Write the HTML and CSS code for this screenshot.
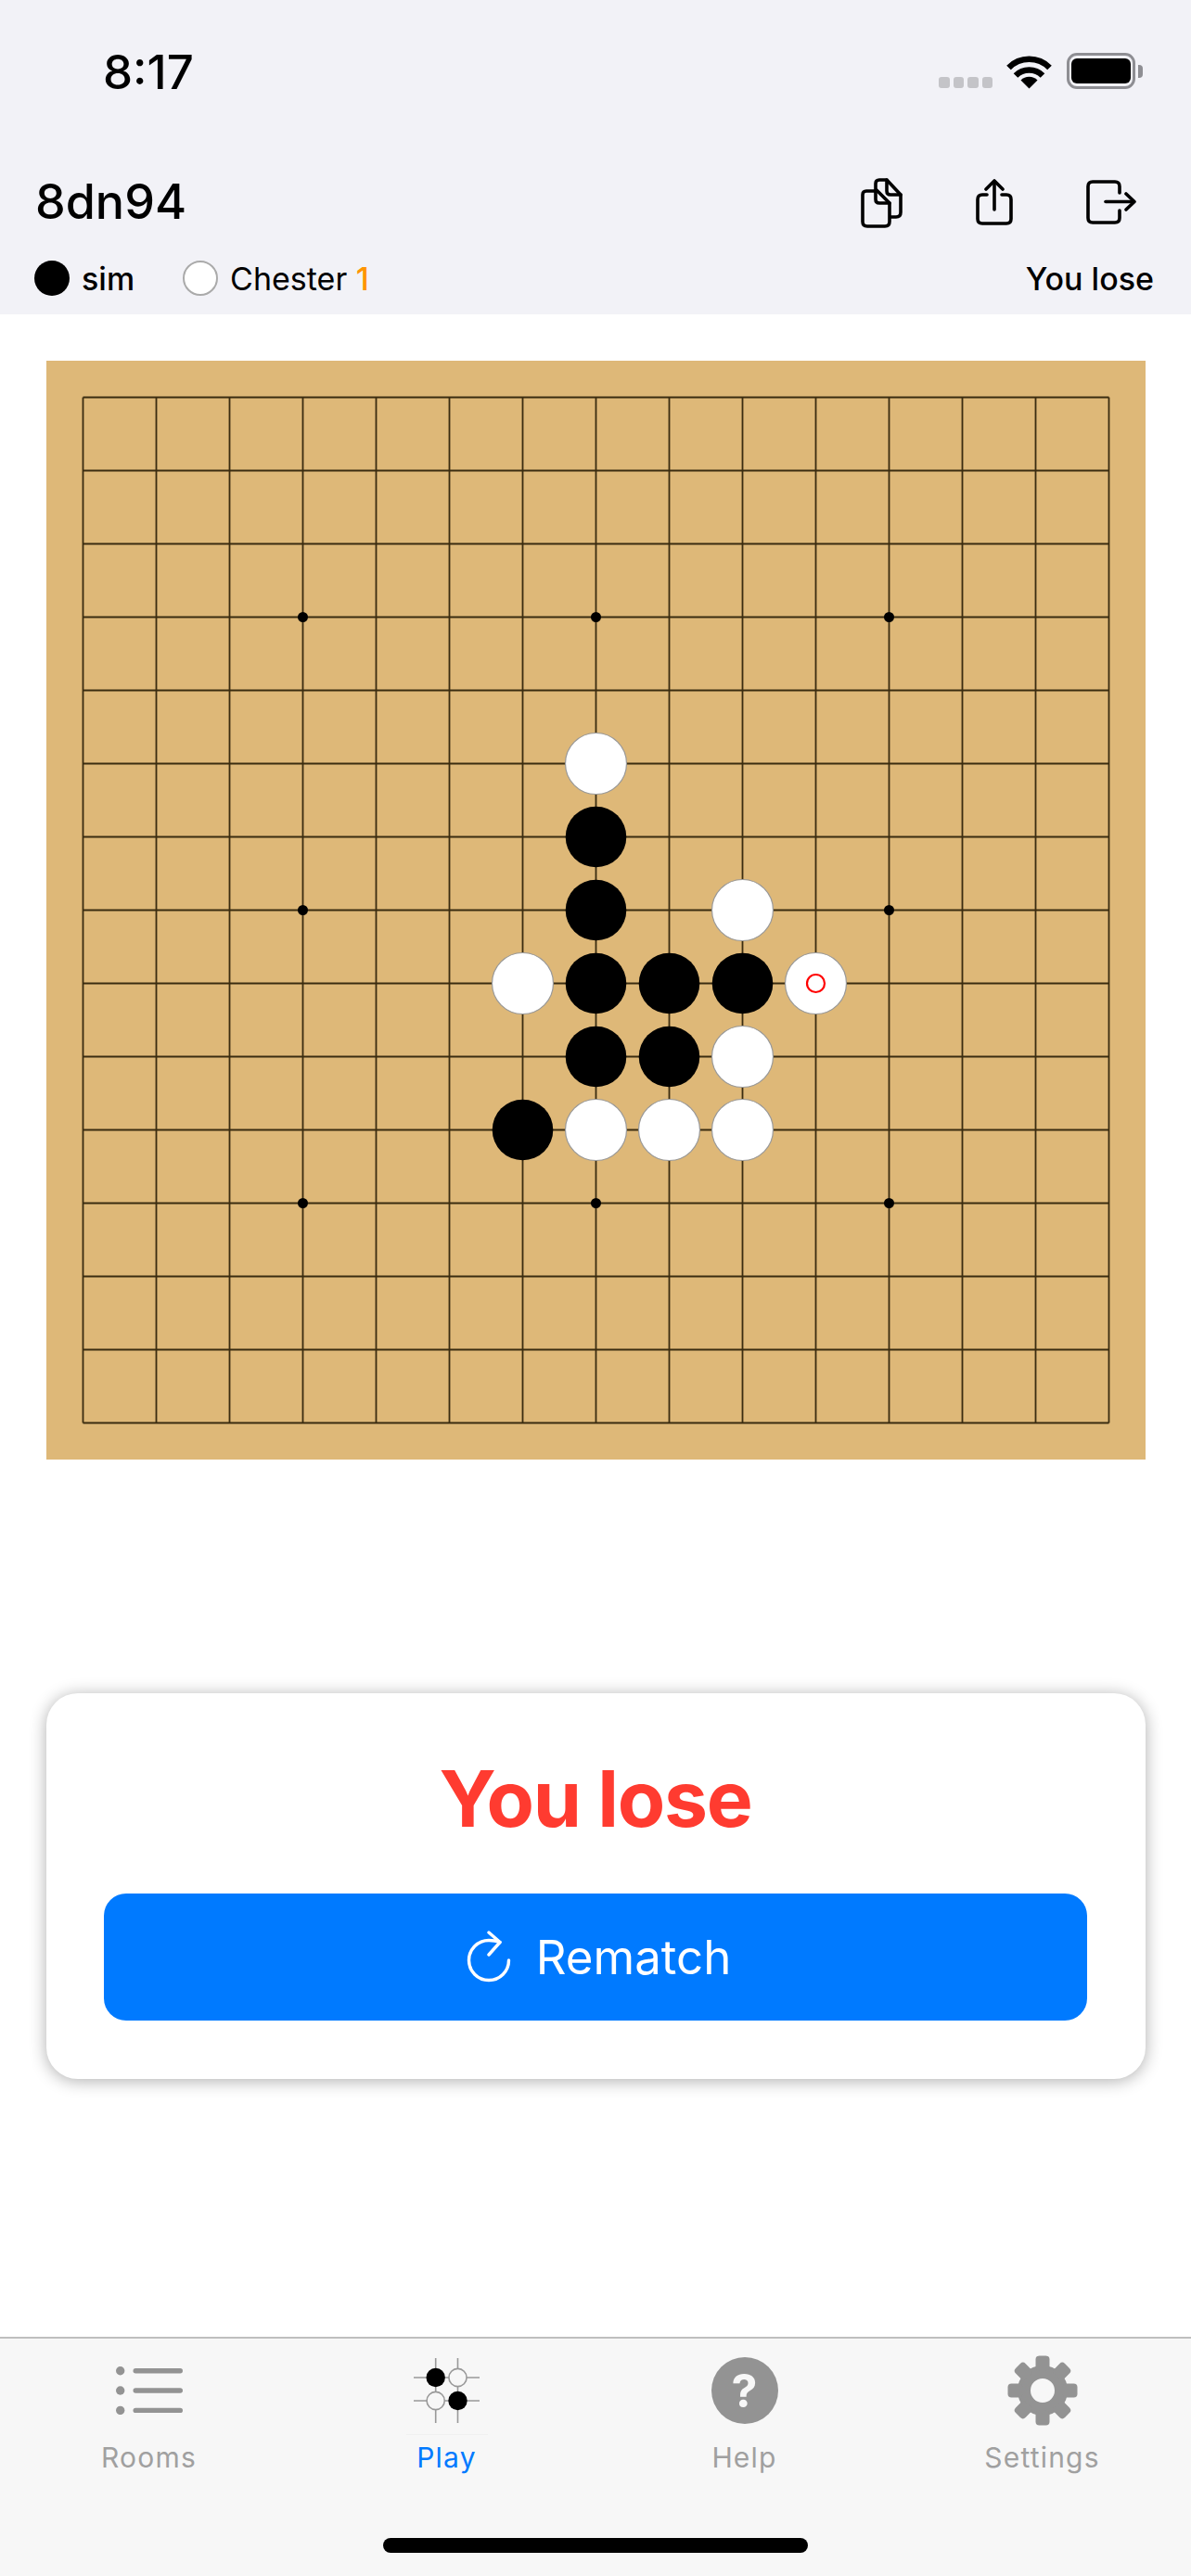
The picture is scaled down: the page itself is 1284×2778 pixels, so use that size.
FILE: index.html
```html
<!DOCTYPE html>
<html>
<head>
    <title>Gomoku</title>
    <link rel="stylesheet" href="styles.css">
</head>
<body>
    <div class="app">
        <header class="top">
            <div class="status-bar">
                <span class="clock">8:17</span>
                <div class="status-icons">
                    <div class="signal"><i></i><i></i><i></i><i></i></div>
                    <svg class="wifi" width="49" height="38" viewBox="0 0 49 38">
                        <path d="M2.5 15 A31 31 0 0 1 46.5 15" fill="none" stroke="#000" stroke-width="6.5"/>
                        <path d="M10 23.5 A20.5 20.5 0 0 1 39 23.5" fill="none" stroke="#000" stroke-width="6.5"/>
                        <path d="M24.5 37.5 L15.5 28.5 A12.7 12.7 0 0 1 33.5 28.5 Z" fill="#000"/>
                    </svg>
                    <div class="battery"><div class="battery-level"></div></div>
                    <div class="battery-cap"></div>
                </div>
            </div>
            <div class="title-row">
                <h1>8dn94</h1>
                <div class="actions">
                    <svg class="icon-copy" width="46" height="55" viewBox="0 0 46 55">
                        <path d="M16 15 H7 Q3 15 3 19 V48 Q3 53 8 53 H27 Q32 53 32 48 V28 L18 14"/>
                        <path d="M17 15 V24 Q17 28 21 28 H32"/>
                        <path d="M17 15 V7 Q17 3 21 3 H29 L44 19 V38 Q44 43 39 43 H33"/>
                        <path d="M29 3 V15 Q29 19 33 19 H44"/>
                    </svg>
                    <svg class="icon-share" width="40" height="50" viewBox="0 0 40 50">
                        <path d="M12 17 H7 Q2 17 2 22 V43 Q2 48 7 48 H33 Q38 48 38 43 V22 Q38 17 33 17 H28"/>
                        <path d="M20 33 V3"/>
                        <path d="M11 11 L20 2 L29 11"/>
                    </svg>
                    <svg class="icon-exit" width="54" height="48" viewBox="0 0 54 48">
                        <path d="M36 14 V7 Q36 2 31 2 H7 Q2 2 2 7 V41 Q2 46 7 46 H31 Q36 46 36 41 V33"/>
                        <path d="M21 23.5 H51"/>
                        <path d="M43 15 L52 23.5 L43 32"/>
                    </svg>
                </div>
            </div>
            <div class="players">
                <div class="player">
                    <span class="player-stone black"></span>
                    <span class="player-name strong">sim</span>
                </div>
                <div class="player">
                    <span class="player-stone white"></span>
                    <span class="player-name">Chester <b class="score">1</b></span>
                </div>
                <span class="result-small">You lose</span>
            </div>
        </header>

        <main class="game">
            <svg class="board" width="1185" height="1185" viewBox="0 0 1185 1185">
                <rect width="1185" height="1185" fill="#deb878"/>
                <g class="grid">
                    <path d="M39.5 39.5 H1145.5 M39.5 118.5 H1145.5 M39.5 197.5 H1145.5 M39.5 276.5 H1145.5 M39.5 355.5 H1145.5 M39.5 434.5 H1145.5 M39.5 513.5 H1145.5 M39.5 592.5 H1145.5 M39.5 671.5 H1145.5 M39.5 750.5 H1145.5 M39.5 829.5 H1145.5 M39.5 908.5 H1145.5 M39.5 987.5 H1145.5 M39.5 1066.5 H1145.5 M39.5 1145.5 H1145.5"/>
                    <path d="M39.5 39.5 V1145.5 M118.5 39.5 V1145.5 M197.5 39.5 V1145.5 M276.5 39.5 V1145.5 M355.5 39.5 V1145.5 M434.5 39.5 V1145.5 M513.5 39.5 V1145.5 M592.5 39.5 V1145.5 M671.5 39.5 V1145.5 M750.5 39.5 V1145.5 M829.5 39.5 V1145.5 M908.5 39.5 V1145.5 M987.5 39.5 V1145.5 M1066.5 39.5 V1145.5 M1145.5 39.5 V1145.5"/>
                </g>
                <g class="star">
                    <circle cx="276.5" cy="276.5" r="5.5"/>
                    <circle cx="592.5" cy="276.5" r="5.5"/>
                    <circle cx="908.5" cy="276.5" r="5.5"/>
                    <circle cx="276.5" cy="592.5" r="5.5"/>
                    <circle cx="908.5" cy="592.5" r="5.5"/>
                    <circle cx="276.5" cy="908.5" r="5.5"/>
                    <circle cx="592.5" cy="908.5" r="5.5"/>
                    <circle cx="908.5" cy="908.5" r="5.5"/>
                </g>
                <g class="stones-black">
                    <circle cx="592.5" cy="513.5" r="32.8"/>
                    <circle cx="592.5" cy="592.5" r="32.8"/>
                    <circle cx="592.5" cy="671.5" r="32.8"/>
                    <circle cx="671.5" cy="671.5" r="32.8"/>
                    <circle cx="750.5" cy="671.5" r="32.8"/>
                    <circle cx="592.5" cy="750.5" r="32.8"/>
                    <circle cx="671.5" cy="750.5" r="32.8"/>
                    <circle cx="513.5" cy="829.5" r="32.8"/>
                </g>
                <g class="stones-white">
                    <circle cx="592.5" cy="434.5" r="33"/>
                    <circle cx="750.5" cy="592.5" r="33"/>
                    <circle cx="513.5" cy="671.5" r="33"/>
                    <circle cx="829.5" cy="671.5" r="33"/>
                    <circle cx="750.5" cy="750.5" r="33"/>
                    <circle cx="592.5" cy="829.5" r="33"/>
                    <circle cx="671.5" cy="829.5" r="33"/>
                    <circle cx="750.5" cy="829.5" r="33"/>
                </g>
                <circle class="last-move" cx="829.5" cy="671.5" r="9.5"/>
            </svg>

            <section class="result-card">
                <h2>You lose</h2>
                <button class="rematch">
                    <svg width="48" height="58" viewBox="0 0 48 58">
                        <path d="M36 12.5 Q30.5 10.5 24 10.5 A21.5 21.5 0 1 0 45.5 32"/>
                        <path d="M24 2 L36 12.5 L24 26"/>
                    </svg>
                    <span>Rematch</span>
                </button>
            </section>
        </main>

        <nav class="tabbar">
            <div class="tab">
                <div class="tab-icon">
                    <svg width="72" height="52" viewBox="0 0 72 52" fill="#939393">
                        <circle cx="4.7" cy="4.7" r="4.7"/>
                        <circle cx="4.7" cy="26" r="4.7"/>
                        <circle cx="4.7" cy="47.4" r="4.7"/>
                        <rect x="18.5" y="2" width="53.5" height="5.4" rx="2.7"/>
                        <rect x="18.5" y="23.3" width="53.5" height="5.4" rx="2.7"/>
                        <rect x="18.5" y="44.7" width="53.5" height="5.4" rx="2.7"/>
                    </svg>
                </div>
                <span>Rooms</span>
            </div>
            <div class="tab active">
                <div class="tab-icon">
                    <svg width="71" height="70" viewBox="0 0 71 70">
                        <path d="M23.7 0 V70 M47.5 0 V70 M0 21 H71 M0 46 H71" stroke="#999" stroke-width="1.6"/>
                        <circle cx="23.7" cy="21" r="10.2" fill="#000"/>
                        <circle cx="47.5" cy="46" r="10.2" fill="#000"/>
                        <circle cx="47.5" cy="21" r="9.6" fill="#f7f7f7" stroke="#999" stroke-width="1.6"/>
                        <circle cx="23.7" cy="46" r="9.6" fill="#f7f7f7" stroke="#999" stroke-width="1.6"/>
                    </svg>
                </div>
                <span>Play</span>
            </div>
            <div class="tab">
                <div class="tab-icon">
                    <div class="help-icon">?</div>
                </div>
                <span>Help</span>
            </div>
            <div class="tab">
                <div class="tab-icon">
                    <svg width="76" height="76" viewBox="-38 -38 76 76" fill="#939393">
                        <circle r="20" fill="none" stroke="#939393" stroke-width="14"/>
                        <rect x="-7.5" y="-37.5" width="15" height="16" rx="4"/>
                        <rect x="-7.5" y="-37.5" width="15" height="16" rx="4" transform="rotate(45)"/>
                        <rect x="-7.5" y="-37.5" width="15" height="16" rx="4" transform="rotate(90)"/>
                        <rect x="-7.5" y="-37.5" width="15" height="16" rx="4" transform="rotate(135)"/>
                        <rect x="-7.5" y="-37.5" width="15" height="16" rx="4" transform="rotate(180)"/>
                        <rect x="-7.5" y="-37.5" width="15" height="16" rx="4" transform="rotate(225)"/>
                        <rect x="-7.5" y="-37.5" width="15" height="16" rx="4" transform="rotate(270)"/>
                        <rect x="-7.5" y="-37.5" width="15" height="16" rx="4" transform="rotate(315)"/>
                    </svg>
                </div>
                <span>Settings</span>
            </div>
            <div class="home-indicator"></div>
        </nav>
    </div>
</body>
</html>
```

FILE: styles.css
```css
* {
    box-sizing: border-box;
}

body {
    margin: 0;
    background-color: #fff;
    font-family: Inter, "Liberation Sans", sans-serif;
    color: #000;
}

.app {
    display: flex;
    flex-direction: column;
    width: 1284px;
    height: 2778px;
    overflow: hidden;
}

/* header */
.top {
    height: 339px;
    background-color: #f2f2f7;
    padding-top: 54px;
}

.status-bar {
    display: flex;
    justify-content: space-between;
    align-items: flex-start;
    height: 48px;
    padding: 0 52px 0 111px;
}

.clock {
    font-size: 51px;
    font-weight: 500;
    line-height: 48px;
}

.status-icons {
    display: flex;
    align-items: flex-start;
}

.signal {
    display: flex;
    gap: 4px;
    margin-top: 29px;
    margin-right: 15px;
}

.signal i {
    width: 11.5px;
    height: 12px;
    border-radius: 3px;
    background-color: #c4c4c8;
}

.wifi {
    margin-top: 4px;
    margin-right: 16px;
}

.battery {
    width: 74px;
    height: 39px;
    margin-top: 3px;
    padding: 3px 2px;
    border: 3px solid #8e8e93;
    border-radius: 11px;
}

.battery-level {
    height: 100%;
    border-radius: 6px;
    background-color: #000;
}

.battery-cap {
    width: 5px;
    height: 14px;
    margin-top: 16px;
    margin-left: 3px;
    border-radius: 0 4px 4px 0;
    background-color: #8e8e93;
}

.title-row {
    display: flex;
    justify-content: space-between;
    align-items: center;
    height: 70px;
    margin-top: 81px;
    padding: 0 59px 0 38px;
}

h1 {
    margin: 0;
    font-size: 52px;
    font-weight: 500;
    line-height: 64px;
}

.actions {
    display: flex;
    align-items: center;
    gap: 79px;
}

.actions svg {
    fill: none;
    stroke: #000;
    stroke-width: 3.6;
    stroke-linecap: round;
    stroke-linejoin: round;
}

.players {
    display: flex;
    align-items: center;
    height: 40px;
    margin-top: 27px;
    padding: 0 40px 0 37px;
    font-size: 34px;
}

.player {
    display: flex;
    align-items: center;
    gap: 13px;
    margin-right: 52px;
}

.player-stone {
    width: 38px;
    height: 38px;
    border-radius: 50%;
}

.player-stone.black {
    background-color: #000;
}

.player-stone.white {
    background-color: #fff;
    border: 2px solid #aaa;
}

.player-name.strong {
    font-weight: 500;
}

.score {
    color: #ff9500;
    font-weight: 500;
}

.result-small {
    margin-left: auto;
    font-weight: 500;
}

/* board */
.game {
    flex: 1;
    padding: 50px 49.5px 0;
}

.board {
    display: block;
}

.grid path {
    fill: none;
    stroke: #3a2c10;
    stroke-width: 1.8;
}

.star circle,
.stones-black circle {
    fill: #000;
}

.stones-white circle {
    fill: #fff;
    stroke: #999;
    stroke-width: 1.2;
}

.last-move {
    fill: none;
    stroke: #f00;
    stroke-width: 2.2;
}

/* result card */
.result-card {
    height: 416px;
    margin-top: 252px;
    padding: 62px 62.5px 0;
    background-color: #fff;
    border-radius: 34px;
    box-shadow: 0 2px 18px rgba(0, 0, 0, 0.32);
}

h2 {
    margin: 0 0 50px;
    font-size: 84px;
    font-weight: 700;
    line-height: 104px;
    letter-spacing: -1.3px;
    text-align: center;
    color: #ff3b30;
}

.rematch {
    display: flex;
    justify-content: center;
    align-items: center;
    gap: 27px;
    width: 100%;
    height: 137px;
    padding: 0 0 0 7px;
    border: none;
    border-radius: 24px;
    background-color: #007aff;
    color: #fff;
    font-family: inherit;
    font-size: 51px;
}

.rematch svg {
    fill: none;
    stroke: #fff;
    stroke-width: 3.4;
    stroke-linecap: round;
    stroke-linejoin: round;
}

/* tab bar */
.tabbar {
    position: relative;
    display: grid;
    grid-template-columns: repeat(4, 1fr);
    height: 258px;
    padding: 18px 0 0;
    background-color: #f7f7f7;
    border-top: 2px solid #bfbfbf;
}

.tab {
    display: flex;
    flex-direction: column;
    align-items: center;
    font-size: 30px;
    line-height: 36px;
    letter-spacing: 1.2px;
    color: #a0a0a0;
}

.tab-icon {
    position: relative;
    display: flex;
    justify-content: center;
    align-items: center;
    width: 88px;
    height: 76px;
    margin-bottom: 16px;
}

.tab.active {
    color: #007aff;
}

.tab.active .tab-icon::after {
    content: "";
    position: absolute;
    top: 85px;
    left: 0;
    width: 88px;
    height: 1px;
    background-color: #f0f0f0;
}

.help-icon {
    width: 72px;
    height: 72px;
    border-radius: 50%;
    background-color: #939393;
    color: #f7f7f7;
    font-size: 50px;
    font-weight: 700;
    line-height: 72px;
    letter-spacing: 0;
    text-align: center;
}

.home-indicator {
    position: absolute;
    left: 413px;
    top: 215px;
    width: 458px;
    height: 16px;
    border-radius: 8px;
    background-color: #000;
}
```
